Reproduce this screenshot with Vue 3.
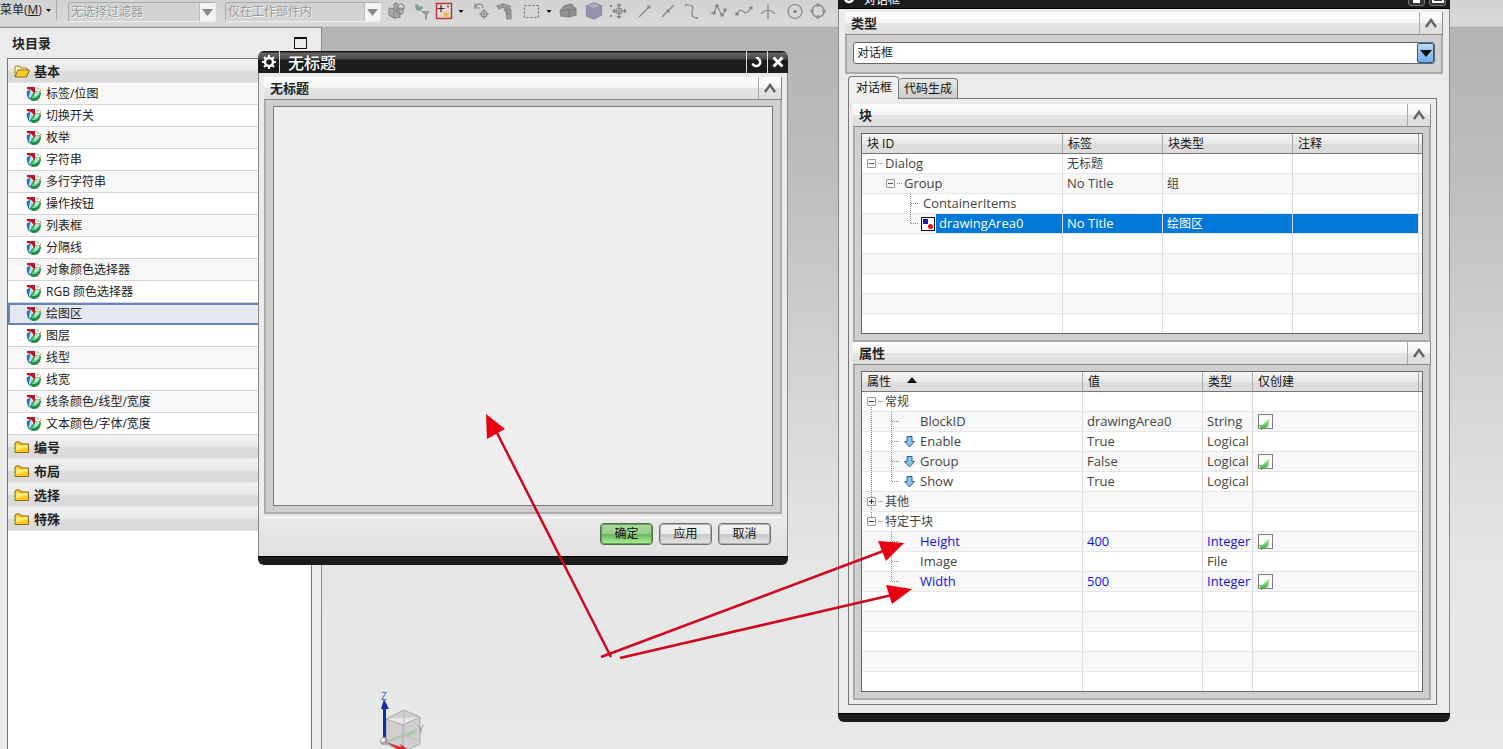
<script setup>
const tools = [
  { w: 24, n: '装配选择', k: 'assembly' },
  { w: 27, n: '过滤器', k: 'filter' },
  { w: 16, n: '选择点', k: 'pick' },
  { w: 18, n: '更多选择', k: 'caret' },
  { w: 22, n: '撤消选择', k: 'undo' },
  { w: 26, n: '画笔', k: 'brush' },
  { w: 26, n: '矩形选择', k: 'marquee' },
  { w: 10, n: '更多矩形', k: 'caret' },
  { w: 28, n: '小平面体', k: 'facet' },
  { w: 23, n: '实体', k: 'cube' },
  { w: 25, n: '移动', k: 'move' },
  { w: 27, n: '端点', k: 'end' },
  { w: 21, n: '中点', k: 'mid' },
  { w: 28, n: '控制点', k: 'control' },
  { w: 24, n: '极点', k: 'pole' },
  { w: 27, n: '样条', k: 'spline' },
  { w: 22, n: '交点', k: 'cross' },
  { w: 31, n: '圆心', k: 'center' },
  { w: 16, n: '象限点', k: 'quad' }
]
const items = ['标签/位图', '切换开关', '枚举', '字符串', '多行字符串', '操作按钮', '列表框', '分隔线', '对象颜色选择器', 'RGB 颜色选择器', '绘图区', '图层', '线型', '线宽', '线条颜色/线型/宽度', '文本颜色/字体/宽度']
const folders = ['编号', '布局', '选择', '特殊']
const isHan = (s) => /[\u4e00-\u9fff]/.test(s)

const blocks = [
  { pre: 5, toggle: '-', name: 'Dialog', cells: ['无标题', '', ''] },
  { pre: 24, toggle: '-', name: 'Group', cells: ['No Title', '组', ''] },
  { pre: 61, d: 'M48.5 0V20M49 9.5H57', name: 'ContainerItems', cells: ['', '', ''] },
  { pre: 59, d: 'M48.5 0V10M49 9.5H57', icon: 'area', name: 'drawingArea0', cells: ['No Title', '绘图区', ''], sel: true },
  ...Array.from({ length: 5 }, () => ({ cells: ['', '', ''] }))
]
const a = 'M9.5 0V20'
const mid = 'M29.5 0V20M30 9.5H38'
const last = 'M29.5 0V10M30 9.5H38'
const props = [
  { pre: 5, d: 'M9.5 15V20', toggle: '-', name: '常规', cells: ['', ''] },
  { pre: 42, d: a + mid, icon: 'none', name: 'BlockID', cells: ['drawingArea0', 'String'], check: true },
  { pre: 42, d: a + mid, icon: 'down', name: 'Enable', cells: ['True', 'Logical'] },
  { pre: 42, d: a + mid, icon: 'down', name: 'Group', cells: ['False', 'Logical'], check: true },
  { pre: 42, d: a + last, icon: 'down', name: 'Show', cells: ['True', 'Logical'] },
  { pre: 5, d: 'M9.5 0V5M9.5 15V20', toggle: '+', name: '其他', cells: ['', ''] },
  { pre: 5, d: 'M9.5 0V5', toggle: '-', name: '特定于块', cells: ['', ''] },
  { pre: 42, d: mid, icon: 'none', name: 'Height', cells: ['400', 'Integer'], check: true, blue: true },
  { pre: 42, d: mid, icon: 'none', name: 'Image', cells: ['', 'File'] },
  { pre: 42, d: last, icon: 'none', name: 'Width', cells: ['500', 'Integer'], check: true, blue: true },
  ...Array.from({ length: 5 }, () => ({ cells: ['', ''] }))
]
</script>

<template>
  <div class="desktop">
    <header class="toolbar">
      <button class="menu" type="button"><span>菜单(<u>M</u>)</span><svg width="5" height="3"><path d="M0 0h5L2.500 3z" fill="#111" /></svg></button>
      <span class="sep"></span>
      <label class="combo c1"><select disabled aria-label="选择过滤器"><option>无选择过滤器</option></select><span class="drop"><svg width="11" height="7"><path d="M0 0h11L5.500 7z" fill="#888" /></svg></span></label>
      <label class="combo c2"><select disabled aria-label="选择范围"><option>仅在工作部件内</option></select><span class="drop"><svg width="11" height="7"><path d="M0 0h11L5.500 7z" fill="#888" /></svg></span></label>
      <div class="tools">
        <button v-for="t in tools" :key="t.n" type="button" :aria-label="t.n" :style="{ width: t.w + 'px' }">
          <svg width="18" height="18" viewBox="0 0 18 18" fill="none" stroke="#858585" stroke-width="1.200">
            <template v-if="t.k === 'assembly'"><path d="M1 6l5 1v9l-5-3zM6 9h6v6l-6 1zM6 7V2l3-1v8" fill="#a7aaa7" /><circle cx="13" cy="5" r="3" /><circle cx="12" cy="9" r="3" /></template>
            <template v-else-if="t.k === 'filter'"><path d="M1 3l3-1 1 3 3-1 1 2-3 3-4-1z" fill="#7d9991" stroke="none" /><path d="M7 9h9l-3 4v5l-2-1v-4z" fill="#999" stroke="none" /></template>
            <template v-else-if="t.k === 'pick'"><rect x="1.500" y="1.500" width="15" height="15" fill="#e4dada" stroke="#c22a35" stroke-width="1.400" /><path d="M6 3v7M2.500 6.500h7" stroke="#333" /><path d="M11 9l1 2 3 0-2 2 1 3-3-1-3 1 1-3-1-2h2z" fill="#efb650" stroke="none" /><circle cx="13" cy="4.500" r="1" fill="#555" stroke="none" /></template>
            <path v-else-if="t.k === 'caret'" d="M6.500 8h5L9 11z" fill="#111" stroke="none" />
            <template v-else-if="t.k === 'undo'"><path d="M3 1v5h5M4 5c1-4 7-4 7 1M12 7v10M7 12h10" /><circle cx="12" cy="12" r="3" /></template>
            <template v-else-if="t.k === 'brush'"><path d="M1 4l6-2 7 2v3H9L7 5 3 7zM10 8h5v9h-4z" fill="#9b9b9b" stroke="#8c8c8c" /><path d="M8 7l4 5" stroke="#777" /></template>
            <rect v-else-if="t.k === 'marquee'" x="2.500" y="3.500" width="14" height="12" stroke-dasharray="2 2" stroke="#686868" />
            <template v-else-if="t.k === 'facet'"><path d="M1 9l4-5 7-2 5 5v6l-7 2-8-1z" fill="#909090" stroke="#858585" /><path d="M1 9l9-1 7-1M10 8v7" stroke="#7d7d7d" /></template>
            <template v-else-if="t.k === 'cube'"><path d="M1.500 4L9 1l7.500 3v9L9 17l-7.500-3z" fill="#9393aa" stroke="#8a8aa0" /><path d="M1.500 4L9 6.500 16.500 4 9 1z" fill="#b3b3c3" stroke="#9090a4" /></template>
            <template v-else-if="t.k === 'move'"><path d="M10 2v14M4 9h13M8 4l2-2 2 2M8 14l2 2 2-2M15 7l2 2-2 2M6 7L4 9l2 2" /><circle cx="10" cy="9" r="3" /><path d="M1 3h2v2H1zM1 13h2v2H1z" fill="#858585" stroke="none" /></template>
            <path v-else-if="t.k === 'end'" d="M4 15L14 5M13 4h2v2h-2z" />
            <path v-else-if="t.k === 'mid'" d="M3 15L15 3M8 8h2v2H8z" />
            <path v-else-if="t.k === 'control'" d="M2 3h3c5 0 6 2 4 7-1 5 3 6 6 6M3 2v2M14 15v2" />
            <path v-else-if="t.k === 'pole'" d="M1 11h4L8 3l5 11 4-7M4 10h2v2H4zM7 3h2v2H7zM12 12h2v2h-2zM15 7h2v2h-2z" />
            <path v-else-if="t.k === 'spline'" d="M2 13c1-6 5-5 7-3s5 0 7-5M1 11h2v2H1zM15 5h2v2h-2z" />
            <path v-else-if="t.k === 'cross'" d="M9 2v15M2 12c4-5 10-5 14 0" />
            <template v-else-if="t.k === 'center'"><circle cx="9" cy="9.500" r="7" /><circle cx="9" cy="9.500" r="1.500" fill="#777" stroke="none" /></template>
            <template v-else><circle cx="9" cy="9" r="6" /><path d="M8 2h2v2H8zM8 14h2v2H8zM2 8h2v2H2zM14 8h2v2h-2z" fill="#ccc" /></template>
          </svg>
        </button>
      </div>
    </header>

    <main class="workspace">
      <aside class="catalog">
        <div class="cat-head"><h2>块目录</h2><button type="button" aria-label="停靠" class="dock"></button></div>
        <nav class="cat-list">
          <button class="folder" type="button">
            <svg width="16" height="14" viewBox="0 0 16 14"><path d="M1 12V3l1-1h4l1 2h6v3" fill="#fff1b2" stroke="#a9811c" /><path d="M1 13l3-7h11.500l-3 7z" fill="#ffc928" stroke="#8a6a18" /></svg>基本
          </button>
          <button v-for="i in items" :key="i" type="button" class="item" :class="{ active: i === '绘图区' }">
            <svg width="16" height="16" viewBox="0 0 16 16">
              <path d="M1 12l5 3h6l3-4z" fill="#e3cfae" />
              <path d="M1 5c-1 4 1 8 4 9l2-4-3-6z" fill="#2a6cc0" />
              <path d="M4 5l3 4-2 5-2-3z" fill="#bfe9f7" />
              <path d="M8 5l6 0c2 4-1 9-6 10-3 0-4-1-4-3z" fill="#3fae6c" />
              <path d="M9 6l4-1c1 3-1 5-5 6z" fill="#b5ebc0" />
              <path d="M4 12c4 0 8-2 11-6 0 6-4 9-8 9z" fill="#1d8a50" />
              <path d="M6 11c3 0 6-2 8-5-1 4-4 6-7 6z" fill="#8be0a0" />
              <path d="M1 3V1h8v7L5 4z" fill="#bd1428" />
              <path d="M10 1l4 2-3 1z" fill="#96d6b0" /><path d="M14 2l1 3-1 2z" fill="#e89a58" />
            </svg>{{ i }}
          </button>
          <button v-for="f in folders" :key="f" class="folder" type="button">
            <svg width="16" height="14" viewBox="0 0 16 14"><path d="M1 12.500V3l1-1h4l1 2h7.500v8.500z" fill="#ffc81c" stroke="#8a6a18" /><path d="M2 5h12v2L2 10z" fill="#ffe974" /></svg>{{ f }}
          </button>
        </nav>
      </aside>
      <div class="viewport">
        <svg class="triad" width="56" height="60" viewBox="0 0 56 60">
          <path d="M14 28l18-9 16 7v27l-17 8-17-8zM14 28l17 6 17-8M31 34v27" fill="#cfcfcf" stroke="#a9a9a9" />
          <path d="M14 52l18-8 16 6M32 19v25" fill="none" stroke="#b8b8b8" />
          <path d="M14 50l31-12-2 5-28 8z" fill="#a9c7a9" />
          <path d="M11 49h3V18h3L12 8 9 18h2z" fill="#102fb0" />
          <path d="M14 51l15 5-1-3 12 8H30z" fill="#d62b2b" />
          <circle cx="12" cy="50" r="4" fill="#a5a5a5" /><circle cx="11" cy="49" r="2" fill="#f4f4f4" />
          <text x="9" y="9" font-size="10" fill="#4360d8">Z</text><text x="46" y="42" font-size="10" fill="#899889">Y</text>
        </svg>
      </div>
    </main>

    <section class="window preview" aria-label="无标题">
      <div class="titlebar">
        <button type="button" class="gear" aria-label="设置"><svg width="14" height="14" viewBox="-7 -7 14 14"><circle r="4" fill="none" stroke="#fff" stroke-width="2.500" /><path d="M0-7v2M0 5v2M-7 0h2M5 0h2M-5-5l1.500 1.500M3.500 3.500L5 5M-5 5l1.500-1.500M3.500-3.500L5-5" stroke="#fff" stroke-width="2" /></svg></button>
        <h1>无标题</h1>
        <button type="button" aria-label="重置"><svg width="14" height="14" viewBox="0 0 14 14"><path d="M8 3.500a4 4 0 1 1-5.500 5" fill="none" stroke="#fff" stroke-width="2.500" /><path d="M5 2h4v4z" fill="#fff" /></svg></button>
        <button type="button" aria-label="关闭"><svg width="12" height="12" viewBox="0 0 12 12"><path d="M1.500 1.500l9 9M10.500 1.500l-9 9" stroke="#fff" stroke-width="3" /></svg></button>
      </div>
      <div class="content">
        <section class="group">
          <div class="group-head"><h3>无标题</h3><button type="button" aria-label="折叠"><svg width="14" height="10"><path d="M2 9l5-7 5 7" fill="none" stroke="#666" stroke-width="2.500" /></svg></button></div>
          <div class="group-body canvas-body"><div class="canvas"></div></div>
        </section>
        <div class="actions"><button type="button" class="ok">确定</button><button type="button">应用</button><button type="button">取消</button></div>
      </div>
      <div class="foot"></div>
    </section>

    <section class="window editor" aria-label="对话框">
      <div class="titlebar">
        <button type="button" class="gear" aria-label="设置"><svg width="14" height="14" viewBox="-7 -7 14 14"><circle r="4" fill="none" stroke="#fff" stroke-width="2.500" /></svg></button>
        <h1>对话框</h1>
        <button type="button" class="box" aria-label="最小化"><svg width="12" height="12"><path d="M2 4h7v7H2z" fill="#fff" /></svg></button>
        <button type="button" class="box" aria-label="最大化"><svg width="12" height="12"><path d="M1 1h10v9H1z" fill="none" stroke="#fff" stroke-width="2" /></svg></button>
      </div>
      <div class="content">
        <section class="group type-group">
          <div class="group-head"><h3>类型</h3><button type="button" aria-label="折叠"><svg width="14" height="10"><path d="M2 9l5-7 5 7" fill="none" stroke="#666" stroke-width="2.500" /></svg></button></div>
          <div class="group-body">
            <label class="type-select"><select aria-label="类型"><option>对话框</option></select><span class="drop"><svg width="12" height="7"><path d="M0 0h12L6 7z" fill="#111" /></svg></span></label>
          </div>
        </section>
        <div class="tabs" role="tablist"><button role="tab" type="button" aria-selected="true" class="on">对话框</button><button role="tab" type="button" aria-selected="false">代码生成</button></div>
        <div class="tabpanel" role="tabpanel">
          <section class="group">
            <div class="group-head"><h3>块</h3><button type="button" aria-label="折叠"><svg width="14" height="10"><path d="M2 9l5-7 5 7" fill="none" stroke="#666" stroke-width="2.500" /></svg></button></div>
            <div class="group-body">
              <table>
                <colgroup><col class="w200"><col class="w100"><col class="w130"><col><col class="w3"></colgroup>
                <thead><tr><th>块 ID</th><th>标签</th><th>块类型</th><th>注释</th><th></th></tr></thead>
                <tbody>
                  <tr v-for="(r, n) in blocks" :key="n" :class="{ selected: r.sel }">
                    <td>
                      <div class="tree">
                        <template v-if="r.name">
                          <svg class="guide" :width="r.pre" height="20"><path v-if="r.d" :d="r.d" /></svg>
                          <template v-if="r.toggle"><button type="button" class="toggle" aria-label="展开或折叠"><svg width="9" height="9"><path d="M2 4.500h5" stroke="#555" /></svg></button><svg class="guide" width="9" height="20"><path d="M2 9.500H7" /></svg></template>
                          <svg v-if="r.icon" class="area" width="14" height="14"><rect x=".5" y=".5" width="13" height="13" fill="#fff" stroke="#111" /><path d="M2 2h5v5H2z" fill="#1c1ca8" /><circle cx="9.500" cy="9.500" r="2.500" fill="#e01111" /></svg>
                          <span class="name">{{ r.name }}</span>
                        </template>
                      </div>
                    </td>
                    <td v-for="(c, m) in r.cells" :key="m"><div class="cell" :class="{ han: isHan(c) }">{{ c }}</div></td>
                    <td></td>
                  </tr>
                </tbody>
              </table>
            </div>
          </section>
          <section class="group">
            <div class="group-head"><h3>属性</h3><button type="button" aria-label="折叠"><svg width="14" height="10"><path d="M2 9l5-7 5 7" fill="none" stroke="#666" stroke-width="2.500" /></svg></button></div>
            <div class="group-body">
              <table>
                <colgroup><col class="w220"><col class="w120"><col class="w50"><col><col class="w3"></colgroup>
                <thead><tr><th>属性<svg class="sort" width="10" height="6"><path d="M0 6h10L5 0z" fill="#111" /></svg></th><th>值</th><th>类型</th><th>仅创建</th><th></th></tr></thead>
                <tbody>
                  <tr v-for="(r, n) in props" :key="n" :class="{ blue: r.blue }">
                    <td>
                      <div class="tree">
                        <template v-if="r.name">
                          <svg class="guide" :width="r.pre" height="20"><path v-if="r.d" :d="r.d" /></svg>
                          <template v-if="r.toggle"><button type="button" class="toggle" aria-label="展开或折叠"><svg width="9" height="9"><path :d="r.toggle === '+' ? 'M2 4.500h5M4.500 2v5' : 'M2 4.500h5'" stroke="#333" /></svg></button><svg class="guide" width="9" height="20"><path d="M2 9.500H7" /></svg></template>
                          <svg v-if="r.icon" class="down" width="11" height="12" viewBox="0 0 11 12"><path v-if="r.icon === 'down'" d="M3 .5h5v5h2.500L5.500 11 .5 5.500H3z" fill="#84c3ea" stroke="#356383" /></svg>
                          <span class="name" :class="{ han: isHan(r.name) }">{{ r.name }}</span>
                        </template>
                      </div>
                    </td>
                    <td v-for="(c, m) in r.cells" :key="m"><div class="cell">{{ c }}</div></td>
                    <td><div class="cell"><input v-if="r.check" type="checkbox" checked :aria-label="r.name + ' 仅创建'"></div></td>
                    <td></td>
                  </tr>
                </tbody>
              </table>
            </div>
          </section>
        </div>
      </div>
      <div class="foot"></div>
    </section>

    <svg class="arrows" width="1503" height="749" fill="#e60012" stroke="none">
      <g stroke="#cf0820" stroke-width="2.500"><path d="M611 657L494 427M601 657L886 550M620 658L892 595" fill="none" /></g>
      <path d="M486 414l19 15-18 10zM904 543l-26-2 8 20zM912 589l-26-4 6 19z" />
    </svg>
  </div>
</template>

<style>
html, body { margin: 0; }
</style>

<style scoped>
.desktop { position: relative; display: flex; flex-direction: column; height: 100vh; overflow: hidden; font: 12px/16px "Open Sans", "Noto Sans CJK SC", sans-serif; color: #222; background: #e7e8e8; }
.desktop * { box-sizing: border-box; }
h1, h2, h3 { margin: 0; }
button, select { font: inherit; color: inherit; margin: 0; }
button { padding: 0; border: 0; background: none; display: flex; align-items: center; justify-content: center; white-space: nowrap; }
svg { display: block; flex: none; }
h2, h3, .folder { font: bold 13px/18px "Noto Sans CJK SC", sans-serif; }

.toolbar { display: flex; align-items: flex-start; height: 27px; flex: none; background: linear-gradient(#d2d2d2, #dadada); border-bottom: 1px solid #c4c4c4; }
.menu { width: 56px; height: 20px; justify-content: flex-start; gap: 4px; }
.sep { width: 1px; height: 20px; background: #aaa; }
.combo { position: relative; display: flex; margin-top: 2px; height: 20px; border: 1px solid #aaa; border-right-color: #eee; border-bottom-color: #eee; border-radius: 3px; background: #d3d3d3; }
.combo select { flex: 1; appearance: none; border: 0; padding: 0 0 0 2px; background: none; color: #999; opacity: 1; text-shadow: 1px 1px #f5f5f5; }
.c1 { width: 148px; margin-left: 11px; }
.c2 { width: 156px; margin-left: 9px; }
.combo .drop { width: 16px; background: #f4f4f4; border-left: 1px solid #bbb; }
.drop { display: flex; align-items: center; justify-content: center; }
.tools { display: flex; margin-left: 4px; height: 22px; }
.tools button { flex: none; }

.workspace { flex: 1; display: flex; min-height: 0; }
.catalog { width: 322px; flex: none; display: flex; flex-direction: column; padding: 0 9px 0 7px; background: #ebebeb; border-right: 1px solid #888; border-top: 1px solid #8c8c8c; }
.cat-head { display: flex; align-items: center; justify-content: space-between; height: 30px; flex: none; padding: 0 5px; }
.dock { width: 13px; height: 12px; border: 1px solid #111; border-top-width: 2px; }
.cat-list { flex: 1; border: solid #777; border-width: 1px 1px 0; background: #fff; }
.cat-list button { width: 100%; justify-content: flex-start; }
.folder { height: 24px; padding-left: 6px; gap: 4px; background: linear-gradient(#f3f3f3, #e8e8e8 50%, #dcdcdc 51%, #d9d9d9); border-bottom: 1px solid #e8e8e8; }
.item { height: 22px; padding: 0 0 0 18px; gap: 4px; border-bottom: 1px solid #d4d4d4; }
.item:nth-child(even) { background: #f7f7f7; }
.cat-list .item.active { background: #e5e8f0; border: 2px solid #6287b8; padding-left: 16px; }
.viewport { position: relative; flex: 1; background: linear-gradient(#b4b4b4, #bdbdbd 20%, #d4d5d6 50%, #e5e6e6 75%, #e7e8e8); }
.triad { position: absolute; left: 50px; bottom: -2px; overflow: visible; }

.window { position: absolute; display: flex; flex-direction: column; }
.content { border: solid #888; border-width: 0 1px; flex: 1; background: #ebebeb; }
.titlebar { display: flex; height: 22px; flex: none; border-radius: 6px 6px 0 0; color: #fff; background: linear-gradient(#111 1px, #666 2px, #484848 8px, #1c1c1c 9px); }
.titlebar button { width: 21px; border-left: 1px solid #ddd; }
.titlebar .gear { border-left: 0; border-right: 1px solid #ddd; width: 22px; }
.titlebar h1 { flex: 1; padding-left: 8px; font: 500 16px/22px "Noto Sans CJK SC", sans-serif; }
.foot { height: 9px; flex: none; background: #1c1c1c; border-top: 1px solid #000; border-radius: 0 0 6px 6px; }
.preview { left: 258px; top: 51px; }
.preview .content { padding: 4px 5px 0; background: linear-gradient(#ebebeb 90%, #e1e1e1); }
.group-head { display: flex; height: 23px; justify-content: space-between; align-items: center; padding-left: 6px; background: linear-gradient(#fff, #f3f3f3 50%, #e3e3e3 51%, #dedede); border: solid #888; border-width: 0 1px 1px 0; }
.group-head button { width: 23px; height: 100%; border-left: 1px solid #aaa; }
.group-body { padding: 6px 6px 8px; background: #cfcfcf; border: solid #aaa; border-width: 0 2px 2px; }
.canvas-body { padding: 6px 7px; }
.canvas { width: 500px; height: 400px; background: #efefef; border: 1px solid #777; }
.actions { display: flex; justify-content: flex-end; gap: 6px; margin-top: 3px; padding: 5px 11px 11px; border-top: 1px solid #fff; }
.actions button { width: 53px; height: 22px; border: 1px solid #707070; outline: 1px solid #b0b0b0; outline-offset: -2px; border-radius: 4px; background: linear-gradient(#f3f3f3, #ececec 50%, #c7c7c7 51%, #e4e4e4); color: #111; }
.actions .ok { border-color: #4e6b4a; outline-color: #6a9a62; background: linear-gradient(#acd99e, #96cd88 50%, #67b659 51%, #aef596); }

.editor { left: 838px; right: 53px; top: -13px; }
.editor .titlebar h1 { font-size: 12px; line-height: 24px; font-weight: 400; padding-left: 4px; }
.editor .titlebar .box { width: 17px; height: 17px; margin: 2px 4px 0 0; border: 1px solid #777; border-radius: 3px; background: #333; }
.editor .content { padding: 3px 6px 8px; }
.editor .titlebar { background: #1c1c1c; border-bottom: 1px solid #000; }
.editor .titlebar .gear { border-right: 0; }
.type-group .group-body { padding: 7px 6px 8px; }
.type-select { display: flex; height: 22px; border: 1px solid #666; border-radius: 3px; background: #fff; }
.type-select select { flex: 1; appearance: none; border: 0; background: none; padding: 0 3px; }
.type-select .drop { width: 17px; border: 1px solid #2c5c92; border-radius: 2px; background: linear-gradient(#b8daf8, #6eadea); }
.tabs { display: flex; align-items: flex-end; height: 23px; margin: 2px 0 -1px 3px; position: relative; }
.tabs button { height: 21px; padding: 0 5px; border: 1px solid #777; border-left: 0; border-radius: 4px 4px 0 0; background: linear-gradient(#e8e8e8, #ccc); color: #111; }
.tabs .on { height: 23px; padding: 0 6px 0 7px; border-left: 1px solid #777; border-bottom: 0; background: #f0f0f0; }
.tabpanel { margin: 0 6px 0 3px; padding: 5px 5px 4px 4px; border: 1px solid #777; }
.tabpanel .group-body { padding-bottom: 6px; }

table { width: 100%; table-layout: fixed; border-spacing: 0; border: 1px solid #666; background: #fff; font: 13px/19px "Open Sans", "Noto Sans CJK SC", sans-serif; color: #444; }
.w200 { width: 201px; } .w100 { width: 100px; } .w130 { width: 130px; } .w220 { width: 221px; } .w120 { width: 120px; } .w50 { width: 50px; } .w3 { width: 3px; }
th { height: 20px; padding: 0 0 0 5px; text-align: left; font: 12px/18px "Open Sans", "Noto Sans CJK SC", sans-serif; color: #111; background: linear-gradient(#f5f5f5, #e9e9e9 50%, #dcdcdc 51%, #dcdcdc); border-right: 1px solid #aaa; border-bottom: 1px solid #777; white-space: nowrap; }
th:last-child { padding: 0; border-right: 0; }
td { padding: 0; border-right: 1px solid #ddd; border-bottom: 1px solid #e6e6e6; }
td:last-child { border-right: 0; }
tbody tr:nth-child(even) { background: #f7f7f7; }
tbody tr:last-child td { border-bottom: 0; }
.tree, .cell { display: flex; align-items: center; height: 19px; overflow: hidden; white-space: nowrap; }
.cell { padding-left: 4px; }
.han { font-size: 12px; }
.sort { display: inline-block; margin: 0 0 3px 16px; }
.guide { overflow: visible; fill: none; stroke: #888; stroke-dasharray: 1 1; }
.toggle { width: 9px; height: 9px; flex: none; outline: 1px solid #999; outline-offset: -1px; border-radius: 1px; }
.down { margin-right: 5px; }
.area { margin-right: 1px; }
.selected .name, .selected .cell { background: #0078d7; color: #fff; }
.selected .name { flex: 1; padding-left: 3px; }
.blue { color: #1414e0; }
input { appearance: none; position: relative; width: 15px; height: 15px; margin: 0 0 0 1px; border: 1px solid #8c748c; background: #f7fff5; }
input::after { content: ""; position: absolute; left: 0; top: 3px; width: 11px; height: 12px; background: linear-gradient(#c5efc0, #38a838); clip-path: polygon(0 55%, 30% 60%, 95% 0, 85% 70%, 45% 90%, 20% 100%); }
.arrows { position: absolute; left: 0; top: 0; pointer-events: none; }
</style>
